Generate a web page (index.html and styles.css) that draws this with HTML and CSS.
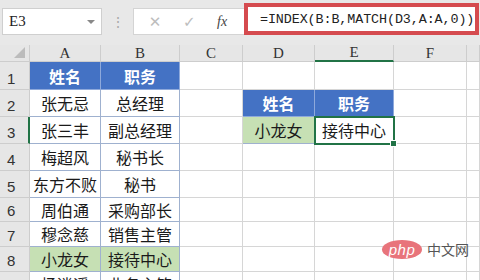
FILE: index.html
```html
<!DOCTYPE html>
<html lang="zh">
<head>
  <meta charset="UTF-8" />
  <title>INDEX MATCH</title>
  <link rel="stylesheet" href="styles.css">
</head>
<body>
  <div class="bar">
    <div class="namebox"><span>E3</span><span class="caret"></span></div>
    <div class="dots">⋮</div>
    <div class="tools">
      <span class="tool">✕</span>
      <span class="tool">✓</span>
      <span class="tool fx">fx</span>
    </div>
    <div class="formula">=INDEX(B:B,MATCH(D3,A:A,0))</div>
  </div>

  <div class="sheet">
    <div class="hd corner"><span class="tri"></span></div>
    <div class="hd col">A</div>
    <div class="hd col">B</div>
    <div class="hd col">C</div>
    <div class="hd col">D</div>
    <div class="hd col sel-col">E</div>
    <div class="hd col">F</div>
    <div class="hd col"></div>

    <div class="hd row">1</div>
    <div class="c t th">姓名</div><div class="c t th">职务</div>
    <div class="c"></div><div class="c"></div><div class="c"></div><div class="c"></div><div class="c"></div>

    <div class="hd row">2</div>
    <div class="c t">张无忌</div><div class="c t">总经理</div>
    <div class="c"></div><div class="c t th">姓名</div><div class="c t th">职务</div><div class="c"></div><div class="c"></div>

    <div class="hd row sel-row">3</div>
    <div class="c t">张三丰</div><div class="c t">副总经理</div>
    <div class="c"></div><div class="c t hit">小龙女</div><div class="c t active">接待中心</div><div class="c"></div><div class="c"></div>

    <div class="hd row">4</div>
    <div class="c t">梅超风</div><div class="c t">秘书长</div>
    <div class="c"></div><div class="c"></div><div class="c"></div><div class="c"></div><div class="c"></div>

    <div class="hd row">5</div>
    <div class="c t">东方不败</div><div class="c t">秘书</div>
    <div class="c"></div><div class="c"></div><div class="c"></div><div class="c"></div><div class="c"></div>

    <div class="hd row">6</div>
    <div class="c t">周伯通</div><div class="c t">采购部长</div>
    <div class="c"></div><div class="c"></div><div class="c"></div><div class="c"></div><div class="c"></div>

    <div class="hd row">7</div>
    <div class="c t">穆念慈</div><div class="c t">销售主管</div>
    <div class="c"></div><div class="c"></div><div class="c"></div><div class="c"></div><div class="c"></div>

    <div class="hd row">8</div>
    <div class="c t hit">小龙女</div><div class="c t hit">接待中心</div>
    <div class="c"></div><div class="c"></div><div class="c"></div><div class="c"></div><div class="c"></div>

    <div class="hd row">9</div>
    <div class="c t">杨逍遥</div><div class="c t">业务主管</div>
    <div class="c"></div><div class="c"></div><div class="c"></div><div class="c"></div><div class="c"></div>
  </div>

  <div class="mark">
    <span class="logo">php</span>
    <span class="cn">中文网</span>
  </div>
</body>
</html>
```

FILE: styles.css
```css
body { margin: 0; width: 480px; height: 280px; overflow: hidden; background: #fff; position: relative;
  font-family: "Noto Sans CJK SC", "Noto Sans", sans-serif; }

.bar { height: 45px; background: #e8e8e8; display: flex; align-items: flex-start; box-sizing: border-box; }
.namebox { margin: 8px 0 0 2px; width: 100px; height: 27px; box-sizing: border-box; background: #fff;
  border: 1px solid #cfcfcf; display: flex; align-items: center; justify-content: space-between;
  padding: 0 6px 0 6px; font-family: "Liberation Serif", serif; font-size: 15px; color: #222; }
.caret { width: 0; height: 0; border-left: 4px solid transparent; border-right: 4px solid transparent;
  border-top: 4px solid #888; }
.dots { width: 31px; text-align: center; margin-top: 11px; color: #aaa; font-size: 14px; }
.tools { margin-top: 8px; width: 111px; height: 27px; background: #fff; border: 1px solid #d4d4d4; border-right: 0;
  box-sizing: border-box; display: flex; align-items: center; justify-content: space-around; padding: 0 6px 0 4px; }
.tool { color: #bdbdbd; font-size: 15px; font-family: "DejaVu Sans", sans-serif; }
.tool.fx { color: #444; font-family: "Liberation Serif", serif; font-style: italic; font-size: 14px; }
.formula { margin-top: 3px; flex: 1; height: 32px; background: #fff; border: 4px solid #d54b4f; box-sizing: border-box;
  margin-right: 1px; font-family: "Liberation Mono", monospace; font-size: 13.4px; color: #222;
  display: flex; align-items: center; padding-left: 12px; white-space: nowrap; letter-spacing: -0.1px; }

.sheet { display: grid; grid-template-columns: 30px 71px 79px 63px 72px 79px 73px 1fr;
  grid-template-rows: 17px 28px 27px 27px 27px 27px 24px 25px 25px 25px; }
.hd { background: #e6e6e6; border-right: 1px solid #cdcdcd; border-bottom: 1px solid #cdcdcd; box-sizing: border-box;
  color: #333; }
.col { font-family: "Liberation Serif", serif; font-size: 15px; display: flex; align-items: center; justify-content: center; }
.row { font-family: "Liberation Sans", sans-serif; font-size: 15px; display: flex; align-items: flex-end;
  padding: 0 0 2px 7px; }
.corner { position: relative; }
.tri { position: absolute; right: 4px; bottom: 3px; width: 0; height: 0;
  border-left: 11px solid transparent; border-bottom: 11px solid #bcbcbc; }
.sel-col { border-bottom: 2px solid #217346; }
.sel-row { border-right: 2px solid #217346; }

.c { border-right: 1px solid #d6d6d6; border-bottom: 1px solid #d6d6d6; box-sizing: border-box; }
.t { display: flex; align-items: center; justify-content: center; font-size: 16px; color: #1a1a1a;
  border-color: #9fb1cf; }
.th { background: #4472c4; color: #fff; font-weight: bold; border-color: #8ea9db; }
.hit { background: #c6e0b4; }
.active { position: relative; outline: 2px solid #217346; outline-offset: -1px; }
.active::after { content: ""; position: absolute; right: -4px; bottom: -4px; width: 5px; height: 5px;
  background: #217346; border: 1px solid #fff; }

.mark { position: absolute; left: 382px; top: 239px; display: flex; align-items: center; gap: 5px; }
.logo { width: 40px; height: 19px; border-radius: 50%; background: #e8747b; color: #fff; font-style: italic;
  font-family: "Liberation Sans", sans-serif; font-size: 15px; display: flex; align-items: center; justify-content: center;
  letter-spacing: 0.5px; }
.cn { color: #555; font-size: 14px; }
```
